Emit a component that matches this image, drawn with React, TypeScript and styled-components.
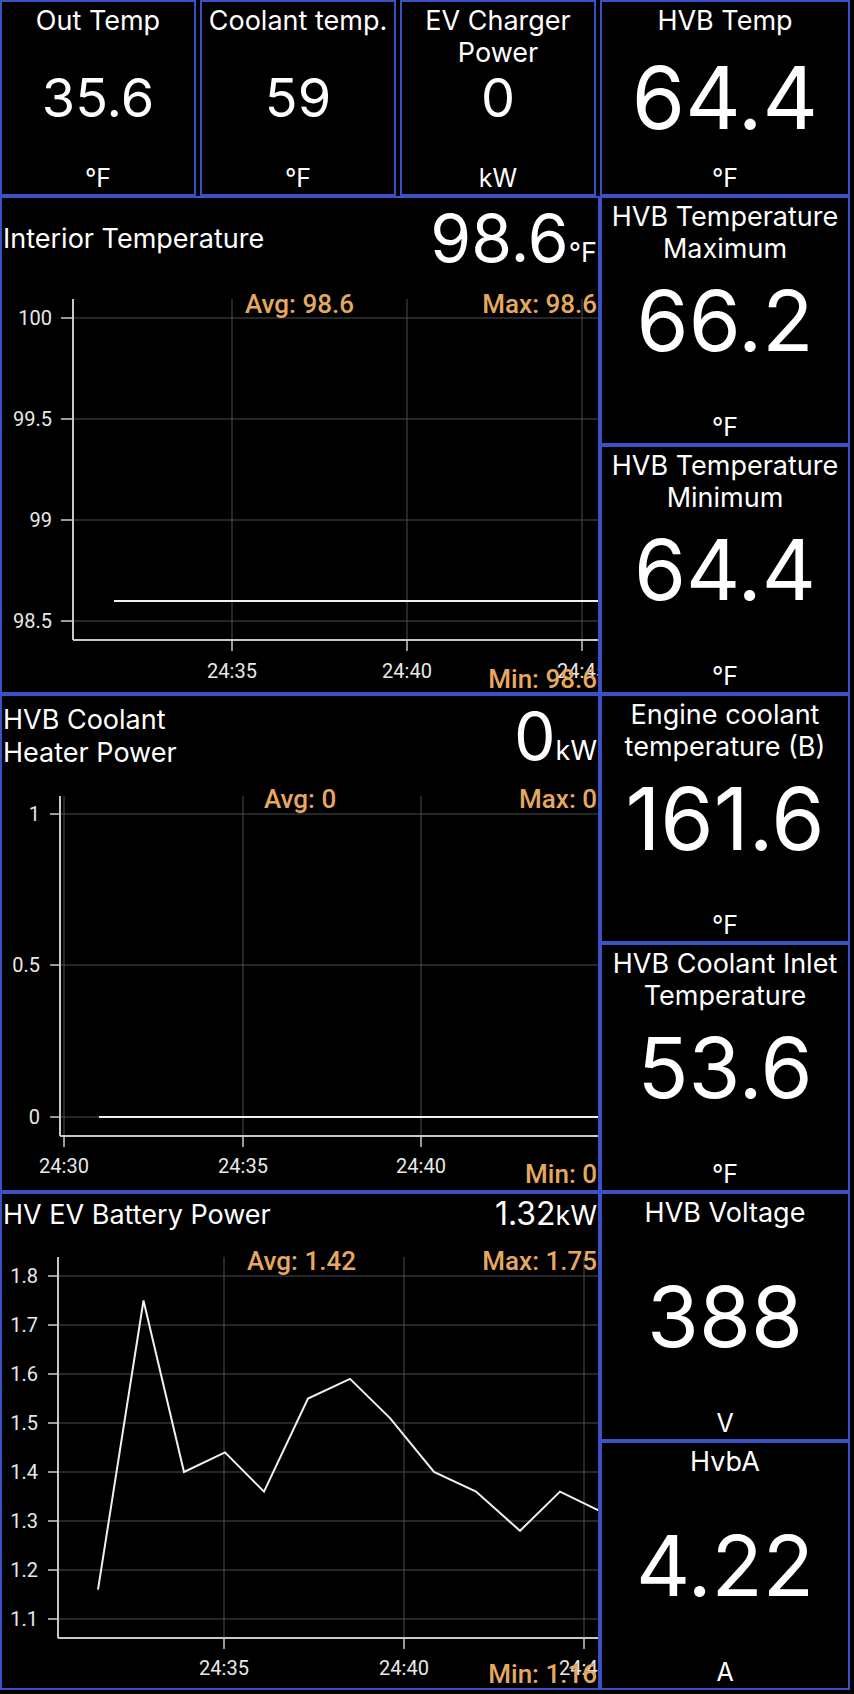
import React from 'react';
import styled, { createGlobalStyle } from 'styled-components';

const BLUE = '#3b51c6';
const ORANGE = '#e6a85e';

const GlobalStyle = createGlobalStyle`
  html, body {
    margin: 0;
    padding: 0;
    background: #000;
  }
  body {
    font-family: Inter, 'Noto Sans', sans-serif;
    color: #fff;
  }
`;

const Page = styled.div`
  width: 854px;
  height: 1694px;
  background: #000;
  display: flex;
  flex-direction: column;
`;

const TopRow = styled.div`
  display: flex;
  gap: 4px;
  height: 196px;
`;

const Body = styled.div`
  display: flex;
`;

const LeftCol = styled.div`
  width: 600px;
  display: flex;
  flex-direction: column;
`;

const RightCol = styled.div`
  width: 250px;
  display: flex;
  flex-direction: column;
`;

const Tile = styled.div<{ $w?: number; $h: number }>`
  box-sizing: border-box;
  width: ${({ $w }) => ($w ? `${$w}px` : '100%')};
  height: ${({ $h }) => $h}px;
  border: 2px solid ${BLUE};
  display: grid;
  grid-template-rows: minmax(0, 1fr) auto minmax(0, 1fr);
  text-align: center;
  overflow: hidden;
`;

const TileTitle = styled.div<{ $size: number }>`
  align-self: start;
  padding-top: 3px;
  font-size: ${({ $size }) => $size}px;
  line-height: 32px;
  white-space: pre-line;
`;

const TileValue = styled.div<{ $size: number }>`
  font-size: ${({ $size }) => $size}px;
  line-height: 1;
`;

const TileUnit = styled.div`
  align-self: end;
  font-size: 25px;
  line-height: 32px;
`;

const ChartPanel = styled.div`
  box-sizing: border-box;
  height: 498px;
  border: 2px solid ${BLUE};
  display: flex;
  flex-direction: column;
  overflow: hidden;
`;

const ChartHeader = styled.div<{ $h: number }>`
  height: ${({ $h }) => $h}px;
  flex-shrink: 0;
  display: flex;
  align-items: center;
  justify-content: space-between;
  padding: 0 1px;
`;

const ChartTitle = styled.div`
  font-size: 27px;
  line-height: 33px;
  white-space: pre-line;
`;

const Reading = styled.div`
  display: flex;
  align-items: baseline;
  white-space: nowrap;
`;

const ReadingValue = styled.span<{ $size: number }>`
  font-size: ${({ $size }) => $size}px;
  line-height: 1;
`;

const ReadingUnit = styled.span`
  font-size: 27px;
  line-height: 1;
`;

const Plot = styled.svg`
  display: block;
  overflow: hidden;
`;

const GridLine = styled.line`
  stroke: #4d4d4d;
  stroke-width: 1;
`;

const AxisLine = styled.line`
  stroke: #c8c8c8;
  stroke-width: 2;
`;

const TickMark = styled.line`
  stroke: #9a9a9a;
  stroke-width: 2;
`;

const DataLine = styled.polyline`
  fill: none;
  stroke: #f0f0f0;
  stroke-width: 2;
`;

const AxisText = styled.text`
  font-family: Roboto, sans-serif;
  font-size: 20px;
  fill: #e8e8e8;
`;

const StatText = styled.text`
  font-family: Roboto, sans-serif;
  font-size: 26px;
  font-weight: 500;
  fill: ${ORANGE};
`;

interface TileData {
  title: string;
  value: string;
  unit: string;
  w?: number;
  size: number;
}

const topTiles: TileData[] = [
  { title: 'Out Temp', value: '35.6', unit: '°F', w: 196, size: 54 },
  { title: 'Coolant temp.', value: '59', unit: '°F', w: 196, size: 54 },
  { title: 'EV Charger\nPower', value: '0', unit: 'kW', w: 196, size: 54 },
  { title: 'HVB Temp', value: '64.4', unit: '°F', w: 250, size: 86 },
];

const sideTiles: TileData[] = [
  { title: 'HVB Temperature\nMaximum', value: '66.2', unit: '°F', size: 84 },
  { title: 'HVB Temperature\nMinimum', value: '64.4', unit: '°F', size: 84 },
  { title: 'Engine coolant\ntemperature (B)', value: '161.6', unit: '°F', size: 86 },
  { title: 'HVB Coolant Inlet\nTemperature', value: '53.6', unit: '°F', size: 84 },
  { title: 'HVB Voltage', value: '388', unit: 'V', size: 84 },
  { title: 'HvbA', value: '4.22', unit: 'A', size: 84 },
];

interface ChartData {
  title: string;
  value: string;
  unit: string;
  valueSize: number;
  headerH: number;
  axisX: number;
  plotTop: number;
  xAxisY: number;
  yLabelRight: number;
  tickStart: number;
  yTicks: { label: string; y: number }[];
  xTicks: { label: string; x: number }[];
  points: [number, number][];
  avg: string;
  max: string;
  min: string;
  avgX: number;
  statY: number;
  minY: number;
  xLabelY: number;
}

const PLOT_W = 596;

const batteryValues = [1.16, 1.75, 1.4, 1.44, 1.36, 1.55, 1.59, 1.51, 1.4, 1.36, 1.28, 1.36, 1.32];
const batteryX = [96, 141.5, 182, 223, 262, 306, 348, 388, 432, 474, 518, 558, 598];

const charts: ChartData[] = [
  {
    title: 'Interior Temperature',
    value: '98.6',
    unit: '°F',
    valueSize: 66,
    headerH: 80,
    axisX: 71,
    plotTop: 21,
    xAxisY: 362,
    yLabelRight: 50,
    tickStart: 59,
    yTicks: [
      { label: '100', y: 40 },
      { label: '99.5', y: 141 },
      { label: '99', y: 242 },
      { label: '98.5', y: 343 },
    ],
    xTicks: [
      { label: '24:35', x: 230 },
      { label: '24:40', x: 405 },
      { label: '24:45', x: 580 },
    ],
    points: [
      [112, 323],
      [598, 323],
    ],
    avg: 'Avg: 98.6',
    max: 'Max: 98.6',
    min: 'Min: 98.6',
    avgX: 243,
    statY: 35,
    minY: 410,
    xLabelY: 400,
  },
  {
    title: 'HVB Coolant\nHeater Power',
    value: '0',
    unit: 'kW',
    valueSize: 66,
    headerH: 80,
    axisX: 58,
    plotTop: 20,
    xAxisY: 360,
    yLabelRight: 38,
    tickStart: 48,
    yTicks: [
      { label: '1', y: 38 },
      { label: '0.5', y: 189 },
      { label: '0', y: 341 },
    ],
    xTicks: [
      { label: '24:30', x: 62 },
      { label: '24:35', x: 241 },
      { label: '24:40', x: 419 },
    ],
    points: [
      [97, 341],
      [598, 341],
    ],
    avg: 'Avg: 0',
    max: 'Max: 0',
    min: 'Min: 0',
    avgX: 262,
    statY: 32,
    minY: 407,
    xLabelY: 397,
  },
  {
    title: 'HV EV Battery Power',
    value: '1.32',
    unit: 'kW',
    valueSize: 32,
    headerH: 40,
    axisX: 56,
    plotTop: 23,
    xAxisY: 404,
    yLabelRight: 36,
    tickStart: 46,
    yTicks: ['1.8', '1.7', '1.6', '1.5', '1.4', '1.3', '1.2', '1.1'].map((label) => ({
      label,
      y: 42 + (1.8 - parseFloat(label)) * 490,
    })),
    xTicks: [
      { label: '24:35', x: 222 },
      { label: '24:40', x: 402 },
      { label: '24:45', x: 582 },
    ],
    points: batteryValues.map((v, i) => [batteryX[i], 42 + (1.8 - v) * 490] as [number, number]),
    avg: 'Avg: 1.42',
    max: 'Max: 1.75',
    min: 'Min: 1.16',
    avgX: 245,
    statY: 36,
    minY: 449,
    xLabelY: 441,
  },
];

const ValueTile = ({ tile, h }: { tile: TileData; h: number }) => (
  <Tile $w={tile.w} $h={h}>
    <TileTitle $size={27}>{tile.title}</TileTitle>
    <TileValue $size={tile.size}>{tile.value}</TileValue>
    <TileUnit>{tile.unit}</TileUnit>
  </Tile>
);

const LineChart = ({ chart, idx }: { chart: ChartData; idx: number }) => {
  const h = 494 - chart.headerH;
  const clipId = `plot-clip-${idx}`;
  return (
    <ChartPanel>
      <ChartHeader $h={chart.headerH}>
        <ChartTitle>{chart.title}</ChartTitle>
        <Reading>
          <ReadingValue $size={chart.valueSize}>{chart.value}</ReadingValue>
          <ReadingUnit>{chart.unit}</ReadingUnit>
        </Reading>
      </ChartHeader>
      <Plot width={PLOT_W} height={h} viewBox={`0 0 ${PLOT_W} ${h}`}>
        <defs>
          <clipPath id={clipId}>
            <rect x={chart.axisX} y={0} width={PLOT_W - chart.axisX} height={chart.xAxisY} />
          </clipPath>
        </defs>
        {chart.yTicks.map((t) => (
          <g key={t.label}>
            <GridLine x1={chart.axisX} y1={t.y} x2={PLOT_W} y2={t.y} />
            <TickMark x1={chart.tickStart} y1={t.y} x2={chart.axisX} y2={t.y} />
            <AxisText x={chart.yLabelRight} y={t.y + 7} textAnchor="end">
              {t.label}
            </AxisText>
          </g>
        ))}
        {chart.xTicks.map((t) => (
          <g key={t.label}>
            <GridLine x1={t.x} y1={chart.plotTop} x2={t.x} y2={chart.xAxisY} />
            <TickMark x1={t.x} y1={chart.xAxisY} x2={t.x} y2={chart.xAxisY + 11} />
            <AxisText x={t.x} y={chart.xLabelY} textAnchor="middle">
              {t.label}
            </AxisText>
          </g>
        ))}
        <AxisLine x1={chart.axisX} y1={chart.plotTop} x2={chart.axisX} y2={chart.xAxisY} />
        <AxisLine x1={chart.axisX} y1={chart.xAxisY} x2={PLOT_W} y2={chart.xAxisY} />
        <DataLine clipPath={`url(#${clipId})`} points={chart.points.map((p) => p.join(',')).join(' ')} />
        <StatText x={chart.avgX} y={chart.statY}>
          {chart.avg}
        </StatText>
        <StatText x={PLOT_W - 1} y={chart.statY} textAnchor="end">
          {chart.max}
        </StatText>
        <StatText x={PLOT_W - 1} y={chart.minY} textAnchor="end">
          {chart.min}
        </StatText>
      </Plot>
    </ChartPanel>
  );
};

export default function App() {
  return (
    <>
      <GlobalStyle />
      <Page>
        <TopRow>
          {topTiles.map((t) => (
            <ValueTile key={t.title} tile={t} h={196} />
          ))}
        </TopRow>
        <Body>
          <LeftCol>
            {charts.map((c, i) => (
              <LineChart key={c.title} chart={c} idx={i} />
            ))}
          </LeftCol>
          <RightCol>
            {sideTiles.map((t) => (
              <ValueTile key={t.title} tile={t} h={249} />
            ))}
          </RightCol>
        </Body>
      </Page>
    </>
  );
}
